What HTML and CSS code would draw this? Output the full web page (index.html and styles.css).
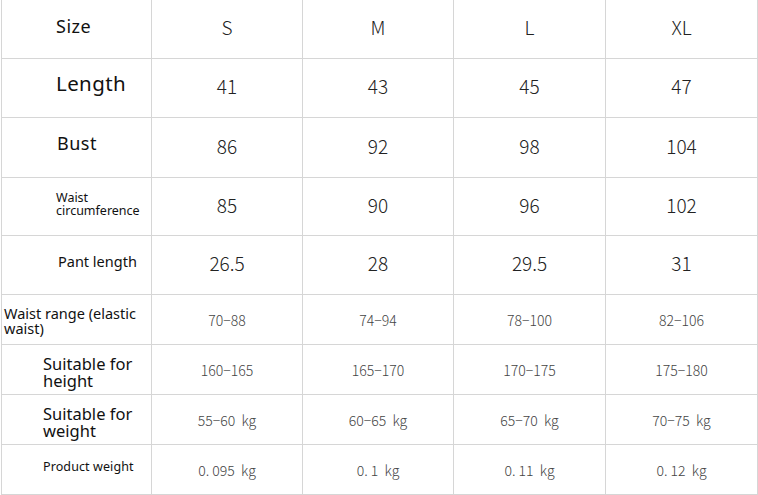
FILE: index.html
```html
<!DOCTYPE html>
<html>
<head>
<meta charset="utf-8">
<link rel="stylesheet" href="styles.css">
</head>
<body>
<div class="chart">
  <div class="cell label l-size">Size</div>
  <div class="cell val big">S</div>
  <div class="cell val big">M</div>
  <div class="cell val big">L</div>
  <div class="cell val big">XL</div>

  <div class="cell label l-length">Length</div>
  <div class="cell val big">41</div>
  <div class="cell val big">43</div>
  <div class="cell val big">45</div>
  <div class="cell val big">47</div>

  <div class="cell label l-bust">Bust</div>
  <div class="cell val big">86</div>
  <div class="cell val big">92</div>
  <div class="cell val big">98</div>
  <div class="cell val big">104</div>

  <div class="cell label l-waist">Waist<br>circumference</div>
  <div class="cell val big">85</div>
  <div class="cell val big">90</div>
  <div class="cell val big">96</div>
  <div class="cell val big">102</div>

  <div class="cell label l-pant">Pant length</div>
  <div class="cell val big">26.5</div>
  <div class="cell val big">28</div>
  <div class="cell val big">29.5</div>
  <div class="cell val big">31</div>

  <div class="cell label l-range">Waist range (elastic<br>waist)</div>
  <div class="cell val small">70−88</div>
  <div class="cell val small">74−94</div>
  <div class="cell val small">78−100</div>
  <div class="cell val small">82−106</div>

  <div class="cell label l-suit">Suitable for<br>height</div>
  <div class="cell val small">160−165</div>
  <div class="cell val small">165−170</div>
  <div class="cell val small">170−175</div>
  <div class="cell val small">175−180</div>

  <div class="cell label l-suit">Suitable for<br>weight</div>
  <div class="cell val small">55−60&nbsp; kg</div>
  <div class="cell val small">60−65&nbsp; kg</div>
  <div class="cell val small">65−70&nbsp; kg</div>
  <div class="cell val small">70−75&nbsp; kg</div>

  <div class="cell label l-prod">Product weight</div>
  <div class="cell val small">0.&nbsp;095&nbsp; kg</div>
  <div class="cell val small">0.&nbsp;1&nbsp; kg</div>
  <div class="cell val small">0.&nbsp;11&nbsp; kg</div>
  <div class="cell val small">0.&nbsp;12&nbsp; kg</div>
</div>
</body>
</html>
```

FILE: styles.css
```css
html, body {
  margin: 0;
  padding: 0;
  background: #ffffff;
}

.chart {
  margin-left: 1px;
  width: 757px;
  box-sizing: border-box;
  border-left: 1px solid #d6d6d6;
  display: grid;
  grid-template-columns: 150px 151px 151px 152px 152px;
  grid-template-rows: 59px 59px 60px 58px 59px 50px 50px 50px 50px;
}

.cell {
  box-sizing: border-box;
  border-right: 1px solid #d6d6d6;
  border-bottom: 1px solid #d6d6d6;
  display: flex;
  align-items: center;
}

.label {
  font-family: "Noto Sans", "Open Sans", sans-serif;
  color: #111;
  line-height: 1;
}

.val {
  justify-content: center;
  font-family: "Noto Sans CJK SC", "Noto Sans", sans-serif;
}

.big {
  font-size: 19px;
  font-weight: 300;
  color: #222;
  padding-bottom: 5px;
}

.small {
  font-size: 14px;
  font-weight: 300;
  color: #444;
}

.l-size { font-size: 18px; padding-left: 54px; padding-bottom: 7px; letter-spacing: 0.5px; }
.l-length { font-size: 20.5px; padding-left: 54px; padding-bottom: 9px; letter-spacing: 0.4px; }
.l-bust { font-size: 18px; padding-left: 55px; padding-bottom: 10px; letter-spacing: 0.5px; }
.l-waist { font-size: 12.5px; padding-left: 54px; padding-bottom: 4px; }
.l-pant { font-size: 14.5px; padding-left: 56px; padding-bottom: 7px; }
.l-range { font-size: 14.5px; padding-left: 2px; padding-top: 2px; }
.l-suit { font-size: 16.5px; padding-left: 41px; padding-top: 6px; }
.l-prod { font-size: 12.5px; padding-left: 41px; padding-bottom: 4px; letter-spacing: 0.1px; }
```
